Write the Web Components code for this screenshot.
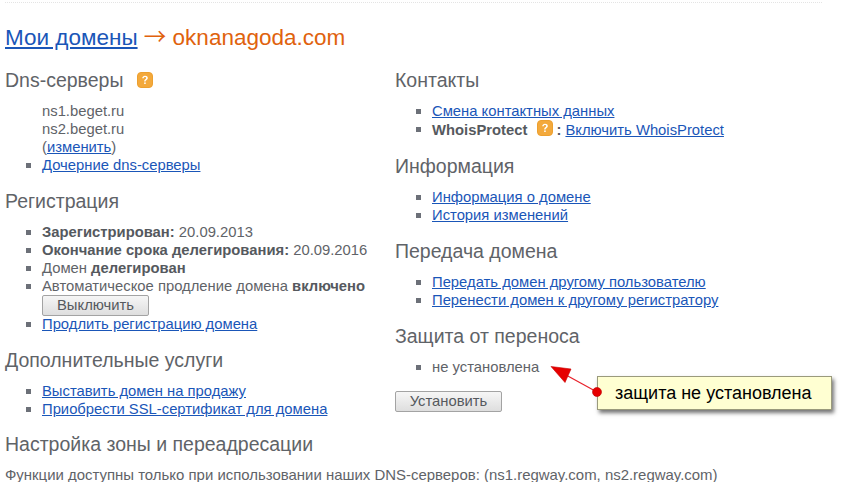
<!DOCTYPE html>
<html>
<head>
<meta charset="utf-8">
<title>Мои домены</title>
<style>
    html, body { margin: 0; padding: 0; background: #fff; }
    body { font-family: "Liberation Sans", Arial, sans-serif; color: #5f6368; }
    a { color: #1a56b8; text-decoration: underline; }
    b { color: #55595e; }
</style>
</head>
<body>
<domain-page>
    <span slot="domain">oknanagoda.com</span>

    <info-section slot="left" title="Dns-серверы" help>
        <div class="plain">ns1.beget.ru</div>
        <div class="plain">ns2.beget.ru</div>
        <div class="plain">(<a href="#">изменить</a>)</div>
        <info-row><a href="#">Дочерние dns-серверы</a></info-row>
    </info-section>
    <info-section slot="left" title="Регистрация">
        <info-row><b>Зарегистрирован:</b> 20.09.2013</info-row>
        <info-row><b>Окончание срока делегирования:</b> 20.09.2016</info-row>
        <info-row>Домен <b>делегирован</b></info-row>
        <info-row>Автоматическое продление домена <b>включено</b><br><grey-button>Выключить</grey-button></info-row>
        <info-row><a href="#">Продлить регистрацию домена</a></info-row>
    </info-section>
    <info-section slot="left" title="Дополнительные услуги">
        <info-row><a href="#">Выставить домен на продажу</a></info-row>
        <info-row><a href="#">Приобрести SSL-сертификат для домена</a></info-row>
    </info-section>

    <info-section slot="right" title="Контакты">
        <info-row><a href="#">Смена контактных данных</a></info-row>
        <info-row><b>WhoisProtect</b><help-icon></help-icon><b>:</b> <a href="#">Включить WhoisProtect</a></info-row>
    </info-section>
    <info-section slot="right" title="Информация">
        <info-row><a href="#">Информация о домене</a></info-row>
        <info-row><a href="#">История изменений</a></info-row>
    </info-section>
    <info-section slot="right" title="Передача домена">
        <info-row><a href="#">Передать домен другому пользователю</a></info-row>
        <info-row><a href="#">Перенести домен к другому регистратору</a></info-row>
    </info-section>
    <info-section slot="right" title="Защита от переноса">
        <info-row>не установлена</info-row>
        <grey-button slot="after">Установить</grey-button>
    </info-section>

    <info-section slot="bottom" title="Настройка зоны и переадресации" flat>
        Функции доступны только при использовании наших DNS-серверов: (ns1.regway.com, ns2.regway.com)
    </info-section>

    <note-callout slot="overlay">защита не установлена</note-callout>
</domain-page>

<script>
class HelpIcon extends HTMLElement {
    constructor() {
        super();
        this.attachShadow({ mode: "open" });
        this.shadowRoot.innerHTML = `
        <style>
            :host { display: inline-block; width: 16px; height: 16px; vertical-align: -1px; margin: 0 3px 0 10px; }
            svg { display: block; }
        </style>
        <svg width="16" height="16" viewBox="0 0 16 16">
            <rect x="0.5" y="0.5" width="15" height="15" rx="3.5" fill="#f3a93c" stroke="#eda02f"/>
            <path d="M5.2 6.2C5.3 4.6 6.5 3.7 8 3.7c1.6 0 2.8.9 2.8 2.3 0 1.2-.7 1.7-1.4 2.2-.6.4-.8.7-.8 1.4H7.2c0-1.2.3-1.7 1.1-2.3.6-.4.9-.7.9-1.2 0-.6-.5-1-1.2-1-.7 0-1.2.4-1.3 1.1z" fill="#fff"/>
            <rect x="7.2" y="10.4" width="1.5" height="1.6" fill="#fff"/>
        </svg>
        `;
    }
}

class GreyButton extends HTMLElement {
    constructor() {
        super();
        this.attachShadow({ mode: "open" });
        this.shadowRoot.innerHTML = `
        <style>
            :host { display: inline-block; box-sizing: border-box; width: 107px; height: 21px; line-height: 19px;
                text-align: center; font-size: 14.8px; color: #55595e; border: 1px solid #a3a3a3; border-radius: 2px;
                background: linear-gradient(#f6f6f6, #dedede); cursor: default; vertical-align: top; margin-bottom: -1px; }
        </style>
        <slot></slot>
        `;
    }
}

class InfoRow extends HTMLElement {
    constructor() {
        super();
        this.attachShadow({ mode: "open" });
        this.shadowRoot.innerHTML = `
        <style>
            :host { display: block; position: relative; padding-left: 37px; line-height: 18.1px; font-size: 14.8px; }
            .bullet { position: absolute; left: 21px; top: 7px; width: 5px; height: 5px; background: #6c7078; }
        </style>
        <span class="bullet"></span><slot></slot>
        `;
    }
}

class InfoSection extends HTMLElement {
    constructor() {
        super();
        const title = this.getAttribute("title") || "";
        const help = this.hasAttribute("help") ? "<help-icon></help-icon>" : "";
        this.attachShadow({ mode: "open" });
        this.shadowRoot.innerHTML = `
        <style>
            :host { display: block; margin-bottom: 15.7px; }
            h2 { margin: 0 0 11px; font-size: 19.5px; font-weight: normal; line-height: 22px; color: #5f6368; }
            h2 help-icon { margin-left: 14px; }
            ::slotted(.plain) { padding-left: 37px; line-height: 18.1px; font-size: 14.8px; }
            :host([flat]) h2 { margin-bottom: 14px; }
            :host([flat]) .body { font-size: 14.94px; line-height: 12px; white-space: nowrap; }
            .after { display: block; margin-top: 15px; }
        </style>
        <h2>${title}${help}</h2>
        <div class="body"><slot></slot></div>
        <div class="after"><slot name="after"></slot></div>
        `;
    }
}

class NoteCallout extends HTMLElement {
    constructor() {
        super();
        this.attachShadow({ mode: "open" });
        this.shadowRoot.innerHTML = `
        <style>
            :host { position: absolute; left: 540px; top: 355px; width: 300px; height: 65px; display: block; }
            .box { position: absolute; left: 57px; top: 21px; box-sizing: border-box; width: 235px; height: 34px;
                padding-left: 17px; line-height: 32px; font-size: 18px; color: #000; background: #ffffd2;
                border: 1px solid #9a9a7c; box-shadow: 2px 3px 4px rgba(0,0,0,.55); white-space: nowrap; }
            svg { position: absolute; left: 0; top: 0; overflow: visible; }
        </style>
        <div class="box"><slot></slot></div>
        <svg width="70" height="50" viewBox="0 0 70 50">
            <line x1="26" y1="20" x2="57" y2="37" stroke="#e8202a" stroke-width="1.2"/>
            <polygon points="11,11.5 31,14 25,27.5" fill="#e60000" stroke="#c80000" stroke-width="0.6"/>
            <circle cx="57" cy="37" r="4.5" fill="#e60000" stroke="#b80000" stroke-width="0.6"/>
        </svg>
        `;
    }
}

class DomainPage extends HTMLElement {
    constructor() {
        super();
        this.attachShadow({ mode: "open" });
        this.shadowRoot.innerHTML = `
        <style>
            :host { display: block; position: relative; width: 842px; height: 482px; overflow: hidden; box-sizing: border-box;
                padding: 2px 0 0 5px; }
            .rule { height: 0; border-top: 1px dotted #e4e4e4; margin: 0 20px 0 0; }
            h1 { margin: 22px 0 18px; font-size: 22.5px; font-weight: normal; line-height: 26px; color: #e0620d; }
            h1 a { color: #1a56b8; text-decoration: underline; }
            .arrow { font-family: "Noto Sans CJK SC", "Liberation Sans", sans-serif; line-height: 0; }
            .cols { display: grid; grid-template-columns: 390px 1fr; }
            ::slotted([slot="bottom"]) { margin: -0.8px 0 0; }
        </style>
        <div class="rule"></div>
        <h1><a href="#">Мои домены</a> <span class="arrow">→</span> <slot name="domain"></slot></h1>
        <div class="cols">
            <div><slot name="left"></slot></div>
            <div><slot name="right"></slot></div>
        </div>
        <slot name="bottom"></slot>
        <slot name="overlay"></slot>
        `;
    }
}

customElements.define("help-icon", HelpIcon);
customElements.define("grey-button", GreyButton);
customElements.define("info-row", InfoRow);
customElements.define("info-section", InfoSection);
customElements.define("note-callout", NoteCallout);
customElements.define("domain-page", DomainPage);
</script>
</body>
</html>
